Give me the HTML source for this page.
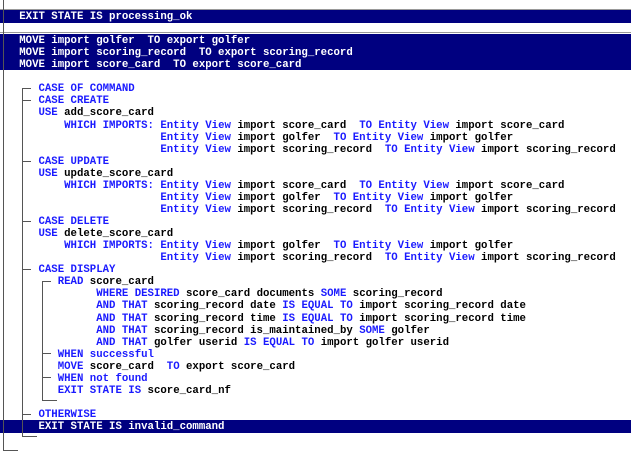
<!DOCTYPE html>
<html><head><meta charset="utf-8"><style>
body{margin:0;width:631px;height:457px;background:#fff;position:relative;overflow:hidden;font-family:"Liberation Mono",monospace;font-weight:bold;font-size:10.7px}
.r{position:absolute;left:0;height:12px;line-height:12px;white-space:pre;color:#000}
.b{color:#1a1aff}
.w .r,.w .b{color:#fff}
.hl{position:absolute;left:0;width:631px;background:#000080}
.l{position:absolute;background:#555}
</style></head><body>
<div class="l" style="left:0;top:9px;width:631px;height:1px;background:#999"></div>
<div class="l" style="left:0;top:32px;width:631px;height:1px;background:#999"></div>
<div class="hl" style="top:10px;height:13px"></div>
<div class="hl" style="top:34px;height:36px"></div>
<div class="hl" style="top:420px;height:13px"></div>
<div class="l" style="left:3px;top:0;width:1px;height:451px"></div>
<div class="l" style="left:3px;top:450px;width:15px;height:1px"></div>
<div class="l" style="left:22px;top:88px;width:1px;height:349px"></div>
<div class="l" style="left:22px;top:436px;width:15px;height:1px"></div>
<div class="l" style="left:22px;top:88px;width:9px;height:1px"></div>
<div class="l" style="left:22px;top:100px;width:9px;height:1px"></div>
<div class="l" style="left:22px;top:161px;width:9px;height:1px"></div>
<div class="l" style="left:22px;top:221px;width:9px;height:1px"></div>
<div class="l" style="left:22px;top:269px;width:9px;height:1px"></div>
<div class="l" style="left:22px;top:414px;width:9px;height:1px"></div>
<div class="l" style="left:42px;top:281px;width:1px;height:120px"></div>
<div class="l" style="left:42px;top:400px;width:15px;height:1px"></div>
<div class="l" style="left:42px;top:281px;width:9px;height:1px"></div>
<div class="l" style="left:42px;top:353px;width:9px;height:1px"></div>
<div class="l" style="left:42px;top:377px;width:9px;height:1px"></div>

<div style="position:absolute;left:0;top:11px;width:631px">
<div class="w">
<div class="r" style="top:0">   EXIT STATE IS processing_ok</div>
<div class="r" style="top:24px">   MOVE import golfer  TO export golfer</div>
<div class="r" style="top:36px">   MOVE import scoring_record  TO export scoring_record</div>
<div class="r" style="top:48px">   MOVE import score_card  TO export score_card</div>
<div class="r" style="top:410px">      EXIT STATE IS invalid_command</div>
</div>
<div class="r" style="top:72px">      <span class="b">CASE OF COMMAND</span></div>
<div class="r" style="top:84px">      <span class="b">CASE CREATE</span></div>
<div class="r" style="top:96px">      <span class="b">USE</span> add_score_card</div>
<div class="r" style="top:109px">          <span class="b">WHICH IMPORTS: Entity View</span> import score_card  <span class="b">TO Entity View</span> import score_card</div>
<div class="r" style="top:121px">                         <span class="b">Entity View</span> import golfer  <span class="b">TO Entity View</span> import golfer</div>
<div class="r" style="top:133px">                         <span class="b">Entity View</span> import scoring_record  <span class="b">TO Entity View</span> import scoring_record</div>
<div class="r" style="top:145px">      <span class="b">CASE UPDATE</span></div>
<div class="r" style="top:157px">      <span class="b">USE</span> update_score_card</div>
<div class="r" style="top:169px">          <span class="b">WHICH IMPORTS: Entity View</span> import score_card  <span class="b">TO Entity View</span> import score_card</div>
<div class="r" style="top:181px">                         <span class="b">Entity View</span> import golfer  <span class="b">TO Entity View</span> import golfer</div>
<div class="r" style="top:193px">                         <span class="b">Entity View</span> import scoring_record  <span class="b">TO Entity View</span> import scoring_record</div>
<div class="r" style="top:205px">      <span class="b">CASE DELETE</span></div>
<div class="r" style="top:217px">      <span class="b">USE</span> delete_score_card</div>
<div class="r" style="top:229px">          <span class="b">WHICH IMPORTS: Entity View</span> import golfer  <span class="b">TO Entity View</span> import golfer</div>
<div class="r" style="top:241px">                         <span class="b">Entity View</span> import scoring_record  <span class="b">TO Entity View</span> import scoring_record</div>
<div class="r" style="top:253px">      <span class="b">CASE DISPLAY</span></div>
<div class="r" style="top:265px">         <span class="b">READ</span> score_card</div>
<div class="r" style="top:277px">               <span class="b">WHERE DESIRED</span> score_card documents <span class="b">SOME</span> scoring_record</div>
<div class="r" style="top:289px">               <span class="b">AND THAT</span> scoring_record date <span class="b">IS EQUAL TO</span> import scoring_record date</div>
<div class="r" style="top:302px">               <span class="b">AND THAT</span> scoring_record time <span class="b">IS EQUAL TO</span> import scoring_record time</div>
<div class="r" style="top:314px">               <span class="b">AND THAT</span> scoring_record is_maintained_by <span class="b">SOME</span> golfer</div>
<div class="r" style="top:326px">               <span class="b">AND THAT</span> golfer userid <span class="b">IS EQUAL TO</span> import golfer userid</div>
<div class="r" style="top:338px">         <span class="b">WHEN successful</span></div>
<div class="r" style="top:350px">         <span class="b">MOVE</span> score_card  <span class="b">TO</span> export score_card</div>
<div class="r" style="top:362px">         <span class="b">WHEN not found</span></div>
<div class="r" style="top:374px">         <span class="b">EXIT STATE IS</span> score_card_nf</div>
<div class="r" style="top:398px">      <span class="b">OTHERWISE</span></div>
</div>
</body></html>
